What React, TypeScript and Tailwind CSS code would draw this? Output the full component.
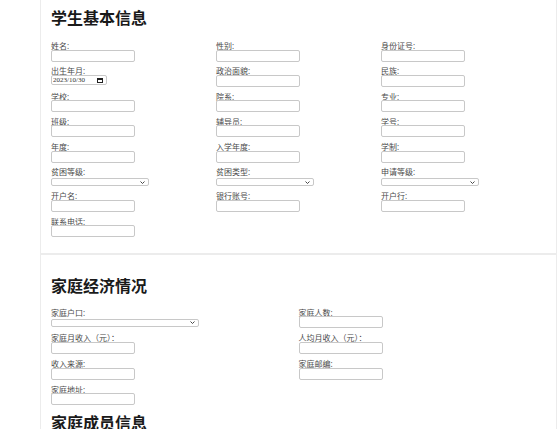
import React from "react";

const font = { fontFamily: '"Noto Sans", "Noto Sans CJK SC", sans-serif' };

function Label({ text }: { text: string }) {
    return <div className="h-[7px] leading-[7px] text-[8px] text-[#4a4a4a] whitespace-nowrap">{text}</div>;
}

function TextField({ label }: { label: string }) {
    return (
        <div className="flex flex-col">
            <Label text={label} />
            <div className="mt-[0.5px] w-[84px] h-[12px] border border-[#c8c8c8] rounded-[2px] bg-white" />
        </div>
    );
}

function DateField({ label }: { label: string }) {
    return (
        <div className="flex flex-col">
            <Label text={label} />
            <div className="mt-[1px] w-[56px] h-[10px] border border-[#c8c8c8] rounded-[2px] bg-white flex items-center justify-between pl-[1px] pr-[3px]">
                <span className="text-[7px] leading-[7px] text-[#333] font-['Liberation_Serif',serif]">2023/10/30</span>
                <svg width="6" height="5" viewBox="0 0 6 5">
                    <rect x="0.5" y="0.5" width="5" height="4" fill="none" stroke="#222" strokeWidth="1" />
                    <rect x="0.5" y="0.5" width="5" height="1.5" fill="#222" />
                </svg>
            </div>
        </div>
    );
}

function SelectField({ label, wide }: { label: string; wide?: boolean }) {
    return (
        <div className="flex flex-col">
            <Label text={label} />
            <div className={`${wide ? "w-[148px]" : "w-[98px]"} mt-[3px] h-[8px] border border-[#c8c8c8] rounded-[2px] bg-white flex items-center justify-end pr-[3px]`}>
                <svg width="5" height="3" viewBox="0 0 5 3">
                    <polyline points="0.5,0.5 2.5,2.5 4.5,0.5" fill="none" stroke="#333" strokeWidth="0.9" />
                </svg>
            </div>
        </div>
    );
}

export default function App() {
    return (
        <div className="bg-white min-h-[429px] h-[429px] overflow-hidden" style={font}>
            <div className="-mt-[14px] ml-[40px] w-[517px]">
                <section className="border border-[#ececec] pt-[21px] pb-[16px] pl-[10px] pr-[10px]">
                    <h2 className="text-[16px] leading-[20px] font-bold text-[#1a1a1a]">学生基本信息</h2>
                    <div className="mt-[14px] grid grid-cols-3 gap-y-[5.8px]">
                        <TextField label="姓名:" />
                        <TextField label="性别:" />
                        <TextField label="身份证号:" />
                        <DateField label="出生年月:" />
                        <TextField label="政治面貌:" />
                        <TextField label="民族:" />
                        <TextField label="学校:" />
                        <TextField label="院系:" />
                        <TextField label="专业:" />
                        <TextField label="班级:" />
                        <TextField label="辅导员:" />
                        <TextField label="学号:" />
                        <TextField label="年度:" />
                        <TextField label="入学年度:" />
                        <TextField label="学制:" />
                        <SelectField label="贫困等级:" />
                        <SelectField label="贫困类型:" />
                        <SelectField label="申请等级:" />
                        <TextField label="开户名:" />
                        <TextField label="银行账号:" />
                        <TextField label="开户行:" />
                        <TextField label="联系电话:" />
                    </div>
                </section>
                <section className="border border-[#ececec] pt-[21px] pb-[20px] pl-[10px] pr-[10px]">
                    <h2 className="text-[16px] leading-[20px] font-bold text-[#1a1a1a]">家庭经济情况</h2>
                    <div className="mt-[12.5px] grid grid-cols-2 gap-y-[6.3px]">
                        <SelectField label="家庭户口:" wide />
                        <TextField label="家庭人数:" />
                        <TextField label="家庭月收入（元）：" />
                        <TextField label="人均月收入（元）：" />
                        <TextField label="收入来源:" />
                        <TextField label="家庭邮编:" />
                        <TextField label="家庭地址:" />
                    </div>
                    <h2 className="mt-[8px] text-[16px] leading-[20px] font-bold text-[#1a1a1a]">家庭成员信息</h2>
                </section>
            </div>
        </div>
    );
}
